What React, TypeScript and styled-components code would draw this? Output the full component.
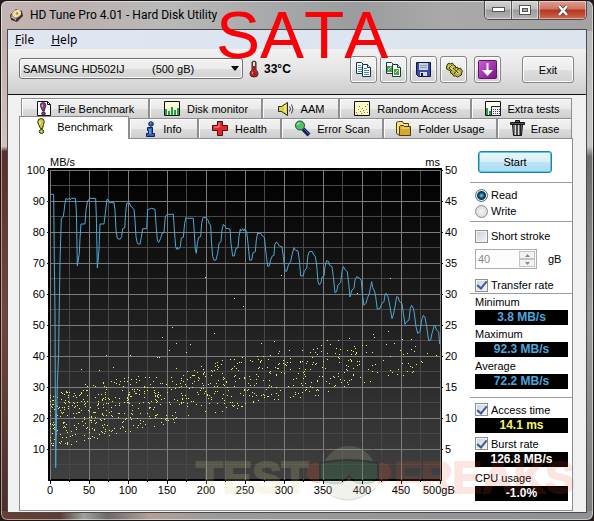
import React, { useState } from 'react';
import styled, { createGlobalStyle, css } from 'styled-components';

const GlobalStyle = createGlobalStyle`
  * { box-sizing: border-box; }
  body {
    margin: 0;
    background: #241a18;
    color: #000;
    font: 11px/14px "Liberation Sans", Arial, sans-serif;
  }
  button, input, select { font: inherit; color: inherit; margin: 0; }
`;

/* ---------- window frame ---------- */

const Frame = styled.div`
  position: relative;
  display: flex;
  flex-direction: column;
  min-height: 100vh;
  padding: 0 6px 7px;
  border: 1px solid #1b1716;
  border-radius: 7px;
  box-shadow: inset 0 0 0 1px rgba(255, 255, 255, 0.5);
  background:
    linear-gradient(90deg, #c3b5b3 0, #bbb1af 12%, #b9b9b9 28%, #a8a9ab 45%, #9b9c9e 60%, #a9a9a9 75%, #a2a2a2 100%) top / 100% 30px no-repeat,
    linear-gradient(90deg, #6b3d33 0, #5c3d36 10%, #a3a0a0 14%, #6e6868 18%, #b3a096 25%, #9b9b9b 36%, #8f9092 100%) bottom / 100% 9px no-repeat,
    linear-gradient(180deg, #b9a6a4 0, #d2c2be 28%, #5a2f2a 29%, #74453d 60%, #4d2d28 100%) left / 50% 100% no-repeat,
    linear-gradient(180deg, #b9b9b9 0, #c6c6c6 28%, #6b6b6b 30%, #9a9a9a 60%, #7d7d7d 100%) right / 50% 100% no-repeat;
`;

const TitleBar = styled.header`
  display: flex;
  align-items: flex-start;
  height: 28px;
  padding-left: 2px;
`;

const Title = styled.h1`
  display: flex;
  align-items: center;
  flex: 1;
  gap: 6px;
  height: 28px;
  margin: 0;
  font: 12px/16px Roboto, "Noto Sans", sans-serif;
`;

const CaptionButtons = styled.div`
  display: flex;
  height: 19px;
  border: 1px solid #4b4b4b;
  border-top: 0;
  border-radius: 0 0 5px 5px;
  overflow: hidden;
`;

const CaptionButton = styled.button<{ $close?: boolean }>`
  display: grid;
  place-items: center;
  width: ${(p) => (p.$close ? 47 : 27)}px;
  padding: 0;
  border: 0;
  border-right: ${(p) => (p.$close ? '0' : '1px solid #5a5a5a')};
  box-shadow: inset 0 0 0 1px rgba(255, 255, 255, 0.45);
  background: ${(p) =>
    p.$close
      ? 'linear-gradient(#dd9d8f, #cf7563 45%, #b23520 50%, #d2684c)'
      : 'linear-gradient(#d2d2d2, #bdbdbd 45%, #9b9b9b 50%, #b5b5b5)'};
`;

const Overlay = styled.div`
  position: absolute;
  top: 0;
  left: 215px;
  color: #fb0007;
  font-size: 66px;
  line-height: 68px;
  font-kerning: none;
  pointer-events: none;
`;

const Client = styled.main`
  display: flex;
  flex-direction: column;
  flex: 1;
  padding-bottom: 1px;
  border: 1px solid #4a4a4a;
  background: #f0f0f0;
`;

const MenuBar = styled.nav`
  display: flex;
  gap: 17px;
  height: 19px;
  padding: 0 7px;
  background: linear-gradient(90deg, #dfe6f2, #dbe4ed);
`;

const MenuItem = styled.button`
  padding: 0;
  border: 0;
  background: none;
  font: 12px/19px "Noto Sans", "Open Sans", sans-serif;
`;

/* ---------- toolbar ---------- */

const Toolbar = styled.div`
  display: flex;
  align-items: flex-start;
  height: 46px;
  padding: 7px 12px 0 11px;
  border-bottom: 1px solid #111;
  background: linear-gradient(#f1f1f1, #e6e6e6 45%, #cdcdcd);
`;

const DriveBox = styled.label`
  display: grid;
  align-items: center;
  width: 224px;
  height: 21px;
  margin-top: 2px;
  > * { grid-area: 1 / 1; }
  > svg { justify-self: end; margin-right: 4px; pointer-events: none; }
`;

const DriveSelect = styled.select`
  width: 100%;
  height: 100%;
  padding: 0 3px;
  appearance: none;
  border: 1px solid #707070;
  border-radius: 3px;
  box-shadow: inset 0 0 0 1px #fafafa;
  background: linear-gradient(#f3f3f3, #ebebeb 50%, #dddddd 51%, #d2d2d2);
`;

const Temperature = styled.div`
  display: flex;
  align-items: center;
  flex: 1;
  gap: 5px;
  height: 26px;
  padding-left: 6px;
  font-size: 12px;
  font-weight: bold;
`;

const ToolGroup = styled.div`
  display: flex;
  gap: 3px;
  margin-right: 7px;
`;

const raised = css`
  border: 1px solid #858585;
  border-radius: 3px;
  box-shadow: inset 0 0 0 1px #fcfcfc;
  background: linear-gradient(#f4f4f4, #ececec 50%, #dedede 51%, #d2d2d2);
`;

const ToolButton = styled.button`
  ${raised}
  display: grid;
  place-items: center;
  width: 27px;
  height: 27px;
  padding: 0;
`;

const ExitButton = styled.button`
  ${raised}
  width: 52px;
  height: 27px;
  margin-left: 21px;
  padding: 0;
`;

/* ---------- tabs ---------- */

const Workspace = styled.div`
  display: flex;
  flex-direction: column;
  flex: 1;
  padding: 3px 13px 0 11px;
`;

const Tabs = styled.div`
  display: flex;
  flex-direction: column;
`;

const TabRow = styled.div<{ $columns: string; $inset?: boolean }>`
  display: grid;
  grid-template-columns: ${(p) => p.$columns};
  height: 20px;
  padding: 0 1px 0 ${(p) => (p.$inset ? 2 : 0)}px;
`;

const Tab = styled.button<{ $active?: boolean }>`
  display: flex;
  align-items: center;
  justify-content: center;
  gap: 6px;
  min-width: 0;
  padding: 0;
  white-space: nowrap;
  border: 1px solid #8c8e94;
  border-width: 1px 1px 0;
  box-shadow: inset 1px 1px 0 #fdfdfd;
  background: linear-gradient(#f2f2f2, #ebebeb 50%, #dddddd 51%, #cfcfcf);
  ${(p) =>
    p.$active &&
    css`
      z-index: 1;
      margin: -2px 0 -1px;
      padding-bottom: 3px;
      gap: 10px;
      background: #fff;
    `}
`;

const Panel = styled.section`
  position: relative;
  display: flex;
  flex: 1;
  border: 1px solid #8c8e94;
  background: #fff;
`;

const ChartColumn = styled.div`
  flex: 1;
  min-width: 0;
  padding-top: 11px;
`;

const ChartSvg = styled.svg`
  display: block;
  width: 100%;
  height: auto;
  text { font: 11px "Liberation Sans", Arial, sans-serif; }
`;

const Watermark = styled.svg`
  position: absolute;
  right: 0;
  bottom: 8px;
  width: 69.2%;
  height: auto;
  overflow: visible;
  pointer-events: none;
`;

/* ---------- side column ---------- */

const Side = styled.aside`
  width: 102px;
  padding-top: 12px;
`;

const StartButton = styled.button`
  display: block;
  width: 74px;
  height: 22px;
  margin: 0 0 9px 8px;
  padding: 0;
  border: 1px solid #2f7d9c;
  border-radius: 3px;
  box-shadow: inset 0 0 0 1px #48cdf0;
  background: linear-gradient(#e9f5fb, #d8effa 50%, #bde3f5 51%, #aadcf1);
`;

const Section = styled.div<{ $top: number; $bottom?: number }>`
  display: flex;
  flex-direction: column;
  padding: ${(p) => p.$top}px 4px ${(p) => p.$bottom ?? 0}px 5px;
  border-top: 1px solid #9b9b9b;
`;

const Option = styled.label<{ $height?: number }>`
  display: flex;
  align-items: center;
  gap: 3px;
  height: ${(p) => p.$height ?? 16}px;
  white-space: nowrap;
`;

const Radio = styled.input.attrs({ type: 'radio' })`
  appearance: none;
  width: 13px;
  height: 13px;
  border: 1px solid #8a8d90;
  border-radius: 50%;
  background: radial-gradient(#f5f5f5, #cfd2d4);
  &:checked {
    border-color: #4c6b7e;
    background: radial-gradient(circle, #6fd0ee 0, #123f5c 3px, #12394f 4px, #e4eef3 5px);
  }
`;

const Check = styled.input.attrs({ type: 'checkbox' })`
  appearance: none;
  width: 13px;
  height: 13px;
  border: 1px solid #8e8f8f;
  box-shadow: inset 0 0 0 1px #f4f4f4;
  background: linear-gradient(135deg, #cbcfd5, #f6f6f6);
  display: grid;
  place-items: center;
  &:checked::after {
    content: "";
    width: 4px;
    height: 8px;
    margin-top: -2px;
    border: solid #3b5a9a;
    border-width: 0 2px 2px 0;
    transform: rotate(40deg);
  }
`;

const SizeRow = styled.div`
  display: flex;
  align-items: center;
  gap: 11px;
  margin: 5px 0 8px;
`;

const Spinner = styled.div`
  display: flex;
  align-items: center;
  width: 62px;
  height: 20px;
  padding: 0 1px 0 2px;
  border: 1px solid #abadb3;
  background: #fdfdfd;
`;

const SizeInput = styled.input`
  flex: 1;
  min-width: 0;
  padding: 0;
  border: 0;
  background: none;
  color: #8a8a8a;
`;

const Arrows = styled.div`
  display: grid;
  grid-template-rows: 8px 8px;
`;

const ArrowButton = styled.button`
  display: grid;
  place-items: center;
  width: 16px;
  padding: 0;
  border: 1px solid #c4c4c4;
  background: #f3f3f3;
`;

const Stats = styled.div<{ $ruled?: boolean }>`
  display: grid;
  gap: 2px;
  padding: ${(p) => (p.$ruled ? '3px' : '1px')} 4px 8px 5px;
  border-top: 1px solid #9b9b9b;
`;

const StatLabel = styled.div`
  height: 15px;
  line-height: 15px;
`;

const Value = styled.output<{ $color: string }>`
  display: block;
  height: 15px;
  background: #000;
  color: ${(p) => p.$color};
  font-size: 12px;
  font-weight: bold;
  line-height: 15px;
  text-align: center;
`;

/* ---------- icons ---------- */

const DiskIcon = () => (
  <svg width="15" height="15" viewBox="0 0 15 15">
    <path d="M1 7 7 1l6 2 1 5-6 6-6-2z" fill="#3a3632" />
    <path d="M2 7 7 2l5 2v3l-5 4-5-1z" fill="#8d8478" />
    <ellipse cx="8" cy="5.500" rx="4.500" ry="3.500" fill="#f4dfa9" transform="rotate(-30 8 6)" />
    <circle cx="8" cy="5.500" r="1.300" fill="#b0854a" />
    <path d="M3 9l4 3" stroke="#d8d0c4" />
  </svg>
);

const ThermometerIcon = () => (
  <svg width="10" height="18" viewBox="0 0 10 18">
    <path d="M3 2q2-2 4 0v8q2 1 2 4 0 3-4 3t-4-3q0-3 2-4z" fill="#8d5050" stroke="#3b2020" />
    <path d="M4 2h2v4H4z" fill="#e4dede" />
    <path d="M4 6h2v5l2 2q0 3-3 3t-3-3l2-2z" fill="#c81414" />
    <path d="M4 12l-1 2" stroke="#ff9d9d" />
  </svg>
);

const CopyIcon = ({ picture }: { picture?: boolean }) => (
  <svg width="17" height="17" viewBox="0 0 17 17">
    <path d="M1.500 1.500h5l2 2v9h-7z" fill="#fff" stroke="#173a42" />
    <path d="M7.500 3.500h5l3 3v9h-8z" fill="#fff" stroke="#173a42" />
    <path d="M12.500 3.500v3h3" fill="#cfe6ef" stroke="#173a42" />
    {picture ? (
      <>
        <path d="M2 5h5v6H2z" fill="#49a34b" />
        <path d="M9 8h5v6H9z" fill="#49a34b" />
        <path d="M3 9l3-3M10 12l3-3" stroke="#d6efaa" />
      </>
    ) : (
      <path d="M3 4.500h3M3 6.500h4M3 8.500h4M3 10.500h4M9 7.500h3M9 9.500h5M9 11.500h5M9 13.500h5" stroke="#3d8fc6" />
    )}
  </svg>
);

const SaveIcon = () => (
  <svg width="17" height="17" viewBox="0 0 17 17">
    <path d="M1.500 1.500h14v14h-12l-2-2z" fill="#3b48a5" stroke="#10173f" />
    <path d="M4 2h9v7H4z" fill="#c9d3dc" />
    <path d="M5 4.500h7M5 6.500h7" stroke="#8899a8" />
    <path d="M5 11h7v4H5z" fill="#d9d9d9" />
    <path d="M6 12h2v3H6z" fill="#10173f" />
  </svg>
);

const GearsIcon = () => (
  <svg width="18" height="17" viewBox="0 0 18 17">
    <path d="M1.500 6l1-3 2-1 1 1 2-1 1 2 2 1v2l2-1 1 2 2-1 1 2 1 1-1 2v2l-2 1-2 1-2-1-2 0-1-2-2-1 0-2-2-1-2-1z" fill="#b5ae42" stroke="#3a3a08" />
    <path d="M3 5l5 4M5 4l4 4M9 9l4 4M11 8l4 4" stroke="#ece67c" />
    <path d="M4 7l3 3M7 4l-3 3M8 7l5 5M13 8l-4 5" stroke="#4a470c" />
  </svg>
);

const DownIcon = () => (
  <svg width="19" height="19" viewBox="0 0 19 19">
    <defs>
      <linearGradient id="violet" x2="1" y2="1">
        <stop stopColor="#cf62d8" />
        <stop offset="1" stopColor="#7a0e86" />
      </linearGradient>
    </defs>
    <rect x="0.500" y="0.500" width="18" height="18" rx="1" fill="url(#violet)" stroke="#5c1567" />
    <path d="M9.500 3v9" stroke="#fff" strokeWidth="2" />
    <path d="M4 10h11l-5.500 6z" fill="#fff" />
  </svg>
);

const ExclamationShape = ({ fill }: { fill: string }) => (
  <g fill={fill} stroke="#2b2a10">
    <path d="M3.500 1.500q3-2 5 0 1.500 2 0 5l-1 4h-2l-2-4q-1.500-3 0-5z" />
    <ellipse cx="6.500" cy="13.500" rx="2.200" ry="2" />
    <path d="M5 3v3" stroke="#fffcd0" />
  </g>
);

const BangIcon = () => (
  <svg width="12" height="17" viewBox="0 0 12 17">
    <ExclamationShape fill="#cfc93c" />
  </svg>
);

const FileBangIcon = () => (
  <svg width="16" height="17" viewBox="0 0 16 17">
    <path d="M1.500 1.500h10l3 3v11h-13z" fill="#fff" stroke="#111" />
    <path d="M11.500 1.500v3h3" fill="none" stroke="#111" />
    <g transform="translate(2 2) scale(.85)"><ExclamationShape fill="#8c2f97" /></g>
  </svg>
);

const MonitorIcon = () => (
  <svg width="18" height="17" viewBox="0 0 18 17">
    <path d="M1.500 1.500h15v14h-15z" fill="#fbfbd6" stroke="#111" />
    <path d="M2 9h2v6H2zM5 11h2v4H5zM8 7h2v8H8zM11 10h2v5h-2zM14 8h2v7h-2z" fill="#21a04c" />
  </svg>
);

const SpeakerIcon = () => (
  <svg width="18" height="16" viewBox="0 0 18 16">
    <path d="M1.500 5.500h3l6-4v13l-6-4h-3z" fill="#d8cf4b" stroke="#2c2a10" />
    <path d="M8 4v7" stroke="#fffbc0" />
    <path d="M12.500 5.500q2 2.500 0 5M14.500 3.500q3 4.500 0 9" fill="none" stroke="#444" />
  </svg>
);

const ScatterIcon = () => (
  <svg width="18" height="17" viewBox="0 0 18 17">
    <path d="M1.500 1.500h15v14h-15z" fill="#fdf9c4" stroke="#111" />
    <path d="M3 12.500h1M5 9.500h1M4 14.500h1M7 11.500h1M8 13.500h1M9 8.500h1M10 10.500h1M12 6.500h1M13 9.500h1M14 4.500h1M11 12.500h1M6 6.500h1M14 12.500h1" stroke="#a07c16" />
  </svg>
);

const ExtraIcon = () => (
  <svg width="18" height="17" viewBox="0 0 18 17">
    <path d="M1.500 1.500h15v14h-15z" fill="#fdfdf0" stroke="#111" />
    <path d="M2 8h2v7H2zM5 11h2v4H5z" fill="#21a04c" />
    <path d="M7.500 6.500h9v9h-9z" fill="#f2eef8" stroke="#222" />
    <path d="M9 9.500h7M9 11.500h7M9 13.500h7" stroke="#55407c" strokeDasharray="1 1" />
  </svg>
);

const InfoIcon = () => (
  <svg width="12" height="16" viewBox="0 0 12 16">
    <g fill="#2c62b8" stroke="#0f2350">
      <circle cx="6" cy="3" r="2.300" />
      <path d="M2.500 6.500h5v6h2v3h-8v-3h2v-3h-1z" />
    </g>
    <path d="M5 2h1M5 8v5" stroke="#9cc6f5" />
  </svg>
);

const CrossIcon = () => (
  <svg width="17" height="17" viewBox="0 0 17 17">
    <path d="M5.500 1.500h5v4h5v5h-5v5h-5v-5h-5v-5h5z" fill="#dc2a2a" stroke="#5a0c0c" />
    <path d="M7 3v4H2" stroke="#ff9a90" fill="none" />
  </svg>
);

const MagnifierIcon = () => (
  <svg width="17" height="17" viewBox="0 0 17 17">
    <path d="M9 9l6 6" stroke="#14205c" strokeWidth="4" />
    <path d="M10 9l5 5" stroke="#4d63c4" />
    <circle cx="6" cy="5.500" r="4.500" fill="#4fc266" stroke="#14502a" />
    <path d="M3 5q1-2 3-2" stroke="#d4fbd0" fill="none" />
  </svg>
);

const FolderIcon = () => (
  <svg width="17" height="17" viewBox="0 0 17 17">
    <path d="M1.500 13.500v-11l2-1h4l1 2h5v3" fill="#f3e184" stroke="#4e3d08" />
    <path d="M4.500 15.500v-9l1-1h3l1 1h6v9z" fill="#d6a92b" stroke="#4e3d08" />
    <path d="M6 8h8" stroke="#f8e79d" />
    <path d="M1.500 13.500l3 2" stroke="#4e3d08" />
  </svg>
);

const BinIcon = () => (
  <svg width="15" height="17" viewBox="0 0 15 17">
    <path d="M2.500 4.500h10l-1 11h-8z" fill="#777" stroke="#151515" />
    <path d="M5.500 5v10M8.500 5v10" stroke="#d9d9d9" />
    <path d="M7 5v10M10.500 5v10" stroke="#222" />
    <path d="M.5 2.500h14v2H.5zM5.500.5h4v2h-4z" fill="#555" stroke="#151515" />
  </svg>
);

/* ---------- benchmark chart ---------- */

const PLOT = { left: 30, top: 20, width: 390, height: 310 };

/* Transfer-rate trace, stored at three units per pixel. */
const TRACE = `92,133 101,133 103,338 105,480 106,750 107,953 108,890 112,700 116,610 117,520 120,338 121,300
124,205 130,200 132,185 135,160 138,145 142,149 148,145 150,149 155,145 166,145 169,180 172,348 178,310 180,265
183,222 195,222 198,180 203,152 208,149 210,145 227,145 229,200 232,354 237,300 240,222 252,222 256,190 261,148
265,150 268,158 282,158 285,180 288,240 292,265 300,268 305,260 308,236 314,234 317,190 320,160 328,159 332,168
342,178 345,210 348,260 352,280 360,283 364,262 368,236 380,236 383,178 386,178 395,175 405,178 409,235 412,270
416,277 422,265 426,250 432,248 436,200 442,193 460,193 463,240 467,290 470,298 472,292 475,298 481,290 484,264
490,262 494,220 498,202 502,205 520,205 523,250 526,300 529,310 532,280 536,262 542,260 545,220 549,203 558,203
565,212 568,222 572,225 574,270 578,320 582,331 588,330 593,310 597,280 603,275 606,240 610,223 615,228 618,235
630,237 633,280 638,318 643,318 648,295 654,293 657,260 661,237 664,243 668,236 672,243 674,237 680,245 684,280
689,331 695,330 699,308 706,305 709,270 713,247 716,252 722,250 727,258 733,262 737,300 743,349 748,348 752,330
757,318 762,316 764,285 768,277 774,280 778,288 786,290 790,320 795,362 800,364 805,345 812,335 816,315 822,293
826,300 834,303 838,330 842,378 850,377 853,362 860,355 864,315 868,305 876,304 880,312 886,320 890,345 894,395
898,405 903,398 906,382 912,378 915,350 920,332 926,335 928,345 936,350 940,380 945,428 950,425 954,405 962,398
966,365 970,350 975,358 982,366 986,400 990,441 996,420 1002,415 1005,390 1010,380 1020,386 1024,392 1028,440
1032,466 1038,460 1042,445 1048,430 1052,410 1055,395 1058,412 1064,425 1067,440 1072,478 1080,475 1086,460
1092,455 1095,435 1098,430 1104,440 1110,470 1116,506 1120,495 1125,470 1130,440 1135,442 1138,455 1146,460
1150,490 1155,523 1160,515 1167,510 1171,475 1175,466 1180,475 1183,490 1188,530 1193,550 1200,545 1205,510
1210,496 1215,502 1220,530 1226,572 1232,570 1236,550 1242,530 1244,525 1250,540 1256,545 1259,582`;

/* Access times well above the main cloud, in chart pixels. */
const OUTLIERS: [number, number][] = [
  [185, 127], [214, 148], [223, 156], [261, 125], [370, 128], [337, 143], [142, 187], [152, 177], [194, 183],
  [156, 193], [170, 194], [166, 202], [149, 200], [137, 207], [139, 207], [86, 205], [110, 205], [61, 219],
  [93, 217], [79, 220], [241, 193], [254, 191], [353, 184], [354, 187], [368, 181], [374, 193], [382, 189],
  [391, 189], [370, 206], [407, 203], [416, 205], [394, 201], [382, 213], [402, 212], [383, 225], [392, 222],
  [357, 222], [370, 220], [329, 188], [318, 190], [307, 190],
];

function interpolate(points: [number, number][], x: number) {
  for (let i = 1; i < points.length; i++) {
    const [x1, y1] = points[i];
    const [x0, y0] = points[i - 1];
    if (x <= x1) return y0 + ((y1 - y0) * (x - x0)) / (x1 - x0);
  }
  return points[points.length - 1][1];
}

function accessDots() {
  let seed = 20117;
  const random = () => {
    seed = (seed * 16807) % 2147483647;
    return seed / 2147483647;
  };
  const fastest: [number, number][] = [[0, 298], [50, 288], [110, 275], [190, 258], [250, 249], [310, 236], [390, 214]];
  const slowest: [number, number][] = [[0, 243], [50, 230], [110, 221], [190, 206], [290, 192], [390, 196]];
  let d = '';
  for (let i = 0; i < 860; i++) {
    const x = Math.floor(Math.pow(random(), 1.45) * 372);
    if (x > 310 && random() > 0.25) continue;
    const low = interpolate(fastest, x);
    const high = interpolate(slowest, x);
    const y = Math.round(high + (low - high) * random());
    d += `M${PLOT.left + x} ${y + 0.5}h1`;
  }
  OUTLIERS.forEach(([x, y]) => {
    d += `M${x} ${y + 0.5}h1`;
  });
  return d;
}

const DOTS = accessDots();
const range = (count: number) => Array.from({ length: count }, (_, i) => i);

function gridPath(minor: boolean) {
  const right = PLOT.left + PLOT.width;
  const bottom = PLOT.top + PLOT.height;
  const shift = minor ? 0.5 : 0;
  let d = '';
  range(minor ? 10 : 11).forEach((i) => {
    const x = PLOT.left + Math.floor((i + shift) * 39) + 0.5;
    const y = PLOT.top + Math.floor((i + shift) * 31) + 0.5;
    d += `M${x} ${PLOT.top}V${bottom}`;
    if (minor || i < 10) d += `M${PLOT.left} ${y}H${right}`;
  });
  return d;
}

function tickPath() {
  let d = '';
  range(21).forEach((i) => {
    const x = PLOT.left + Math.floor(i * 19.5) + 0.5;
    d += `M${x} 331v${i % 2 ? 1 : 3}`;
  });
  range(10).forEach((i) => {
    const y = PLOT.top + i * 31 + 0.5;
    d += `M27 ${y}h2M421 ${y}h2`;
  });
  return d;
}

const Chart = () => (
  <ChartSvg viewBox="0 0 450 355" role="img" aria-label="Transfer rate and access time by disk position">
    <defs>
      <linearGradient id="plot" x2="0" y2="1">
        <stop stopColor="#000" />
        <stop offset="0.500" stopColor="#202020" />
        <stop offset="1" stopColor="#404040" />
      </linearGradient>
    </defs>
    <rect x="28" y="18" width="394" height="313" fill="#000" />
    <rect x={PLOT.left} y={PLOT.top} width={PLOT.width} height={PLOT.height - 1} fill="url(#plot)" />
    <path d={gridPath(true)} stroke="#484848" />
    <path d={gridPath(false)} stroke="#7d7d7d" />
    <path d={tickPath()} stroke="#111" />
    <path d={DOTS} stroke="#f0f066" />
    <g transform="scale(.333333)">
      <polyline points={TRACE} fill="none" stroke="#4fa8d2" strokeWidth="3" />
    </g>
    <text x="30" y="16">MB/s</text>
    <text x="420" y="16" textAnchor="end">ms</text>
    {range(10).map((i) => (
      <g key={i}>
        <text x="25" y={24 + i * 31} textAnchor="end">{100 - i * 10}</text>
        <text x="425" y={24 + i * 31}>{50 - i * 5}</text>
        <text x={30 + i * 39} y="344" textAnchor="middle">{i * 50}</text>
      </g>
    ))}
    <text x="403" y="344">500gB</text>
  </ChartSvg>
);

const TestFreaksMark = () => (
  <Watermark viewBox="0 0 382 66" aria-hidden="true">
    <g fontFamily="Liberation Sans, Arial, sans-serif" fontWeight="bold" fontSize="44">
      <text x="6" y="57" fill="#d8cf8c" stroke="#d8cf8c" strokeWidth="2" opacity="0.180">TEST</text>
      <text x="204" y="57" fill="#e2512a" stroke="#e2512a" strokeWidth="2" opacity="0.140">FREAKS</text>
    </g>
    <g opacity="0.200">
      <circle cx="159" cy="37" r="27" fill="#b9bd9a" />
      <path d="M124 30Q132 6 159 6T194 30" fill="none" stroke="#333" strokeWidth="2" />
      <path d="M130 27q-11-3-14 8 0 11 14 12zM188 27q11-3 14 8 0 11-14 12z" fill="#e2512a" stroke="#7c2c18" />
      <path d="M130 27q29-6 58 0v15q-4 6-18 5-6 0-11-7-5 7-11 7-14 1-18-5z" fill="#2f8a4c" stroke="#1c1c1c" strokeWidth="2" />
      <path d="M132 52q24 24 54 0" fill="none" stroke="#333" />
    </g>
  </Watermark>
);

/* ---------- page ---------- */

const UPPER_TABS = [
  { label: 'File Benchmark', icon: <FileBangIcon /> },
  { label: 'Disk monitor', icon: <MonitorIcon /> },
  { label: 'AAM', icon: <SpeakerIcon /> },
  { label: 'Random Access', icon: <ScatterIcon /> },
  { label: 'Extra tests', icon: <ExtraIcon /> },
];

const LOWER_TABS = [
  { label: 'Benchmark', icon: <BangIcon /> },
  { label: 'Info', icon: <InfoIcon /> },
  { label: 'Health', icon: <CrossIcon /> },
  { label: 'Error Scan', icon: <MagnifierIcon /> },
  { label: 'Folder Usage', icon: <FolderIcon /> },
  { label: 'Erase', icon: <BinIcon /> },
];

const TOOLS = [
  { label: 'Copy text', icon: <CopyIcon /> },
  { label: 'Copy screenshot', icon: <CopyIcon picture /> },
  { label: 'Save', icon: <SaveIcon /> },
  { label: 'Options', icon: <GearsIcon /> },
];

const BLUE = '#4ba7dc';

export default function App() {
  const [mode, setMode] = useState('Read');

  return (
    <>
      <GlobalStyle />
      <Frame>
        <TitleBar>
          <Title><DiskIcon />HD Tune Pro 4.01 - Hard Disk Utility</Title>
          <CaptionButtons>
            <CaptionButton aria-label="Minimize">
              <svg width="13" height="6"><rect x="0.500" y="0.500" width="12" height="4" fill="#fff" stroke="#555" /></svg>
            </CaptionButton>
            <CaptionButton aria-label="Maximize">
              <svg width="12" height="10">
                <rect x="0.500" y="0.500" width="11" height="9" fill="#fff" stroke="#555" />
                <rect x="3.500" y="3.500" width="5" height="3" fill="#aaa" stroke="#555" />
              </svg>
            </CaptionButton>
            <CaptionButton $close aria-label="Close">
              <svg width="12" height="11" viewBox="0 0 12 11">
                <path d="M2 1l8 9M10 1l-8 9" stroke="#6b3a34" strokeWidth="4" />
                <path d="M2 1l8 9M10 1l-8 9" stroke="#fff" strokeWidth="2.500" />
              </svg>
            </CaptionButton>
          </CaptionButtons>
        </TitleBar>

        <Client>
          <MenuBar>
            <MenuItem><u>F</u>ile</MenuItem>
            <MenuItem><u>H</u>elp</MenuItem>
          </MenuBar>

          <Toolbar>
            <DriveBox>
              <DriveSelect aria-label="Drive">
                <option>{'SAMSUNG HD502IJ' + '\u00a0'.repeat(9) + '(500 gB)'}</option>
              </DriveSelect>
              <svg width="8" height="5"><path d="M0 0h8L4 5z" /></svg>
            </DriveBox>
            <Temperature><ThermometerIcon />33°C</Temperature>
            <ToolGroup>
              {TOOLS.map((tool) => (
                <ToolButton key={tool.label} aria-label={tool.label}>{tool.icon}</ToolButton>
              ))}
            </ToolGroup>
            <ToolButton aria-label="Minimize to tray"><DownIcon /></ToolButton>
            <ExitButton>Exit</ExitButton>
          </Toolbar>

          <Workspace>
            <Tabs role="tablist">
              <TabRow $inset $columns="128fr 113fr 77fr 132fr 101fr">
                {UPPER_TABS.map((tab) => (
                  <Tab key={tab.label} role="tab">{tab.icon}{tab.label}</Tab>
                ))}
              </TabRow>
              <TabRow $columns="110fr 69fr 83fr 102fr 114fr 75fr">
                {LOWER_TABS.map((tab, i) => (
                  <Tab key={tab.label} role="tab" $active={i === 0} aria-selected={i === 0}>{tab.icon}{tab.label}</Tab>
                ))}
              </TabRow>
            </Tabs>

            <Panel role="tabpanel">
              <ChartColumn><Chart /></ChartColumn>
              <Side>
                <StartButton>Start</StartButton>
                <Section $top={4} $bottom={2}>
                  {['Read', 'Write'].map((name) => (
                    <Option key={name}>
                      <Radio name="mode" checked={mode === name} onChange={() => setMode(name)} />
                      {name}
                    </Option>
                  ))}
                </Section>
                <Section $top={6}>
                  <Option><Check />Short stroke</Option>
                  <SizeRow>
                    <Spinner>
                      <SizeInput aria-label="Short stroke size" defaultValue="40" disabled />
                      <Arrows>
                        <ArrowButton aria-label="Increase" disabled>
                          <svg width="5" height="3"><path d="M0 3h5L2.500 0z" fill="#888" /></svg>
                        </ArrowButton>
                        <ArrowButton aria-label="Decrease" disabled>
                          <svg width="5" height="3"><path d="M0 0h5L2.500 3z" fill="#888" /></svg>
                        </ArrowButton>
                      </Arrows>
                    </Spinner>
                    gB
                  </SizeRow>
                  <Option><Check defaultChecked />Transfer rate</Option>
                </Section>
                <Stats>
                  <div><StatLabel>Minimum</StatLabel><Value $color={BLUE}>3.8 MB/s</Value></div>
                  <div><StatLabel>Maximum</StatLabel><Value $color={BLUE}>92.3 MB/s</Value></div>
                  <div><StatLabel>Average</StatLabel><Value $color={BLUE}>72.2 MB/s</Value></div>
                </Stats>
                <Stats $ruled>
                  <div><Option $height={17}><Check defaultChecked />Access time</Option><Value $color="#f6f65a">14.1 ms</Value></div>
                  <div><Option $height={17}><Check defaultChecked />Burst rate</Option><Value $color="#fff">126.8 MB/s</Value></div>
                  <div><Option $height={17} as="div">CPU usage</Option><Value $color="#fff">-1.0%</Value></div>
                </Stats>
              </Side>
              <TestFreaksMark />
            </Panel>
          </Workspace>
        </Client>
        <Overlay>SATA</Overlay>
      </Frame>
    </>
  );
}
